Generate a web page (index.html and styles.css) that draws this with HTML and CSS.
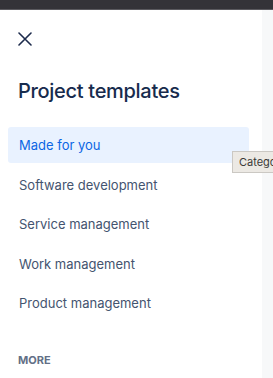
FILE: index.html
```html
<!DOCTYPE html>
<html>
<head>
  <title>Project templates</title>
  <link rel="stylesheet" href="styles.css">
</head>
<body>
  <div class="topbar"></div>
  <div class="layout">
    <nav class="sidebar">
      <button class="close" aria-label="Close">
        <svg width="14" height="14" viewBox="0 0 14 14">
          <path d="M1 1L13 13M13 1L1 13" stroke="#1d2b4c" stroke-width="1.6" stroke-linecap="round"/>
        </svg>
      </button>
      <h1>Project templates</h1>
      <ul class="menu">
        <li class="active">Made for you</li>
        <li>Software development</li>
        <li>Service management</li>
        <li>Work management</li>
        <li>Product management</li>
      </ul>
      <div class="section-title">MORE</div>
      <div class="tooltip">Category</div>
    </nav>
    <main class="content"></main>
  </div>
</body>
</html>
```

FILE: styles.css
```css
html, body {
  margin: 0;
  padding: 0;
  height: 100%;
  overflow: hidden;
}
body {
  font-family: Inter, "Noto Sans", sans-serif;
  background-color: #ffffff;
  color: #44546f;
}
.topbar {
  height: 9px;
  background-color: #343338;
  border-bottom: 1px solid #5b5a5f;
}
.layout {
  display: flex;
  height: calc(100% - 10px);
}
.sidebar {
  position: relative;
  width: 262px;
  flex: none;
}
.content {
  flex: 1;
  background-color: #f7f8f9;
}
.close {
  display: block;
  margin: 22px 0 0 18px;
  padding: 0;
  width: 14px;
  height: 14px;
  border: none;
  background: none;
}
.close svg {
  display: block;
}
h1 {
  margin: 33px 0 0 18px;
  font-size: 20px;
  font-weight: 500;
  line-height: 24px;
  color: #172b4d;
  letter-spacing: -0.3px;
}
.menu {
  list-style: none;
  margin: 24px 13px 0 8px;
  padding: 0;
}
.menu li {
  height: 36px;
  line-height: 36px;
  padding-left: 11px;
  margin-bottom: 3.5px;
  font-size: 13px;
  color: #44546f;
  border-radius: 3px;
}
.menu li.active {
  background-color: #e9f2ff;
  color: #0c66e4;
}
.section-title {
  margin: 32px 0 0 18px;
  font-size: 11px;
  font-weight: 700;
  color: #626f86;
}
.tooltip {
  position: absolute;
  left: 232px;
  top: 141px;
  padding: 2px 6px;
  font-size: 11px;
  line-height: 16px;
  color: #3b3a38;
  background-color: #ece9e4;
  border: 1px solid #cbc8c3;
  white-space: nowrap;
  z-index: 2;
}
```
